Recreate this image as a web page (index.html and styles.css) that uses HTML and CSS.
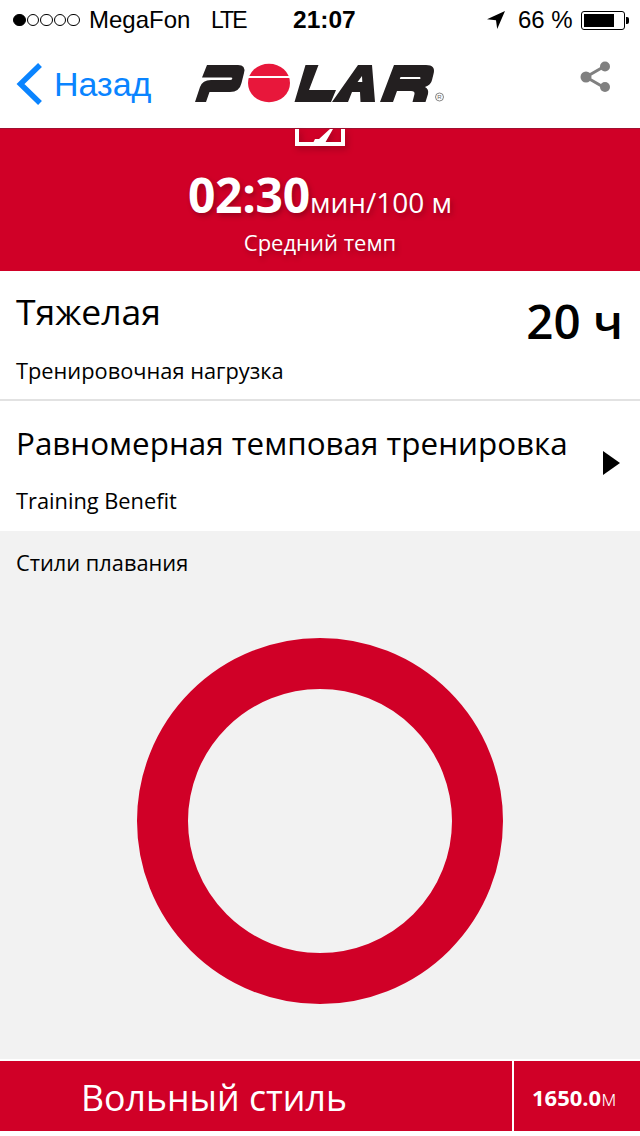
FILE: index.html
```html
<!DOCTYPE html>
<html lang="ru">
<head>
<meta charset="utf-8">
<title>Polar</title>
<link rel="stylesheet" href="styles.css">
</head>
<body>
<div class="status">
  <div class="dots"><i class="dot on"></i><i class="dot"></i><i class="dot"></i><i class="dot"></i><i class="dot"></i></div>
  <span class="carrier">MegaFon</span>
  <span class="net">LTE</span>
  <span class="time">21:07</span>
  <svg class="loc" viewBox="0 0 18 18"><path d="M18 0 L0 8.2 L9 9.2 L10.2 18 Z"/></svg>
  <span class="pct">66 %</span>
  <div class="battery"><div class="cell"><div class="level"></div></div><div class="nub"></div></div>
</div>
<nav class="nav">
  <div class="back">
    <svg class="chev" viewBox="0 0 26 42"><path d="M24 2 L4.500 21 L24 40" fill="none" stroke="#0a84ff" stroke-width="5.500"/></svg>
    <span class="back-text">Назад</span>
  </div>
  <svg class="logo" viewBox="195 60 252 46">
    <path class="lk" fill-rule="evenodd" d="M207 65 H238 Q246 65 244 73 L241.500 83 Q239.500 92 230 92 H209.500 L206 102 H195 L200 87 Q202.500 80 211 80 H230 Q232 80 232.300 78.500 Q232.600 77.500 231 77.500 H202 Z"/>
    <ellipse class="rd" cx="269" cy="83" rx="21" ry="19.300"/>
    <rect class="gap" x="247" y="76" width="44" height="2"/>
    <path class="lk" d="M305.500 65 H318.500 L309 90 H336 L331 102 H294.500 Z"/>
    <path class="lk" fill-rule="evenodd" d="M358 65 H372 L375 102 H360.500 L360 92 H352 L348 102 H332 Z M362 76 L357.500 82 H362.300 Z"/>
    <path class="lk" fill-rule="evenodd" d="M394 65 H426 Q436 65 433.500 74 L432 80 Q431 85 425 87 Q429 89 428 94 L425.500 102 H412.500 L414.500 94 Q415 91 411 91 H397 L393 102 H380 Z M400.500 77 H420 Q421.500 79 419 79 H399.800 Z"/>
    <circle class="reg" cx="439.500" cy="97" r="4"/>
    <text class="regt" x="439.500" y="99.200">R</text>
  </svg>
  <svg class="share" viewBox="0 0 32 32"><path d="M25 5 L6 16 L25 27" fill="none" stroke="#808080" stroke-width="3"/><circle cx="25" cy="5.500" r="5" fill="#808080"/><circle cx="6" cy="16" r="5.500" fill="#808080"/><circle cx="25" cy="26" r="5" fill="#808080"/></svg>
</nav>
<section class="hero">
  <svg class="gauge" viewBox="0 0 50 18"><path d="M2 -4 V15 H48 V-4" fill="none" stroke="#fff" stroke-width="4"/><path d="M18 14 L20 10 L24 10 L36 -1 L38 0 L30 14 Z" fill="#fff"/></svg>
  <div class="pace"><b>02:30</b><span>мин/100 м</span></div>
  <div class="pace-label">Средний темп</div>
</section>
<section class="row load">
  <div class="load-main">
    <div class="title big">Тяжелая</div>
    <div class="sub">Тренировочная нагрузка</div>
  </div>
  <div class="hours">20 ч</div>
</section>
<section class="row benefit">
  <div class="load-main">
    <div class="title">Равномерная темповая тренировка</div>
    <div class="sub">Training Benefit</div>
  </div>
  <div class="tri"></div>
</section>
<section class="styles">
  <div class="styles-title">Стили плавания</div>
  <div class="donut"></div>
</section>
<footer class="foot">
  <div class="foot-name">Вольный стиль</div>
  <div class="foot-val"><b>1650.0</b><span>м</span></div>
</footer>
</body>
</html>
```
FILE: styles.css
```css
* { box-sizing: border-box; }
html, body { margin: 0; padding: 0; }
body { width: 640px; height: 1136px; overflow: hidden; background: #fff; font-family: "Open Sans", sans-serif; color: #000; }

.status { height: 40px; display: flex; align-items: center; padding-left: 13px; font-family: "Liberation Sans", sans-serif; font-size: 24px; color: #000; }
.dots { display: flex; gap: 1px; width: 76px; }
.dot { width: 12.500px; height: 12.500px; border-radius: 50%; border: 1px solid #000; }
.dot.on { background: #000; }
.carrier { width: 122px; }
.net { width: 82px; font-size: 23px; letter-spacing: -2px; }
.time { width: 194px; font-weight: 700; font-size: 24.500px; }
.loc { width: 18px; height: 18px; margin-right: 13px; }
.pct { width: 63px; }
.battery { display: flex; align-items: center; }
.cell { width: 44px; height: 19px; border: 1px solid #000; border-radius: 3px; padding: 2px; }
.level { width: 30px; height: 100%; background: #000; }
.nub { width: 3px; height: 7px; background: #000; border-radius: 0 2px 2px 0; margin-left: 1px; }

.nav { height: 88px; display: flex; align-items: flex-start; }
.back { width: 192px; padding-left: 16px; display: flex; align-items: center; height: 88px; }
.chev { width: 26px; height: 42px; margin-right: 13px; flex: none; }
.back-text { font-family: "Liberation Sans", sans-serif; font-size: 34px; color: #0a84ff; margin-left: -1px; }
.logo { width: 252px; height: 46px; margin: 20px 0 0 3px; flex: none; }
.lk { fill: #231f20; }
.rd { fill: #e8173b; }
.gap { fill: #fff; }
.reg { fill: none; stroke: #666; stroke-width: .8; }
.regt { font-family: "Liberation Sans", sans-serif; font-size: 6px; text-anchor: middle; fill: #666; }
.share { width: 32px; height: 32px; margin: 21px 0 0 133px; flex: none; }

.hero { height: 143px; background: #d00027; border-top: 1px solid #a01030; color: #fff; display: flex; flex-direction: column; align-items: center; text-shadow: 2px 3px 5px rgba(90,0,20,.45); }
.gauge { width: 50px; height: 18px; flex: none; filter: drop-shadow(2px 3px 3px rgba(90,0,20,.45)); }
.pace { margin-top: 15px; height: 60px; line-height: 65px; white-space: nowrap; }
.pace b { font-size: 48px; font-weight: 700; letter-spacing: -.3px; }
.pace span { font-size: 28px; font-weight: 400; }
.pace-label { font-size: 22px; line-height: 30px; margin-top: 5px; }

.row { display: flex; justify-content: space-between; padding: 0 17px 0 16px; background: #fff; }
.load { height: 130px; border-bottom: 2px solid #e2e2e2; }
.benefit { height: 130px; padding-right: 20px; }
.title { font-size: 31.400px; line-height: 44px; white-space: nowrap; }
.title.big { font-size: 35.500px; line-height: 40px; margin-top: 0; }
.sub { font-size: 21.800px; line-height: 30px; margin-top: 21px; }
.title.big + .sub { margin-top: 25px; }
.load-main { padding-top: 20px; }
.hours { font-size: 47.500px; font-weight: 600; line-height: 60px; margin-top: 20px; }
.tri { width: 0; height: 0; border-left: 17px solid #000; border-top: 12px solid transparent; border-bottom: 12px solid transparent; margin-top: 50px; }

.styles { height: 528px; background: #f2f2f2; padding: 17px 0 0 16px; }
.styles-title { font-size: 21.800px; line-height: 30px; }
.donut { width: 366px; height: 366px; margin: 60px 0 0 121px; border-radius: 50%; border: 51px solid #d00027; }

.foot { height: 72px; border-top: 2px solid #fff; display: flex; color: #fff; }
.foot-name { width: 514px; height: 70px; background: #d00027; border-right: 2px solid #fff; font-size: 35.700px; font-weight: 400; line-height: 72px; padding-left: 81px; }
.foot-val { flex: 1; height: 70px; background: #d00027; line-height: 72px; padding-left: 18px; white-space: nowrap; }
.foot-val b { font-size: 22px; font-weight: 700; }
.foot-val span { font-size: 22px; font-weight: 300; }
```
